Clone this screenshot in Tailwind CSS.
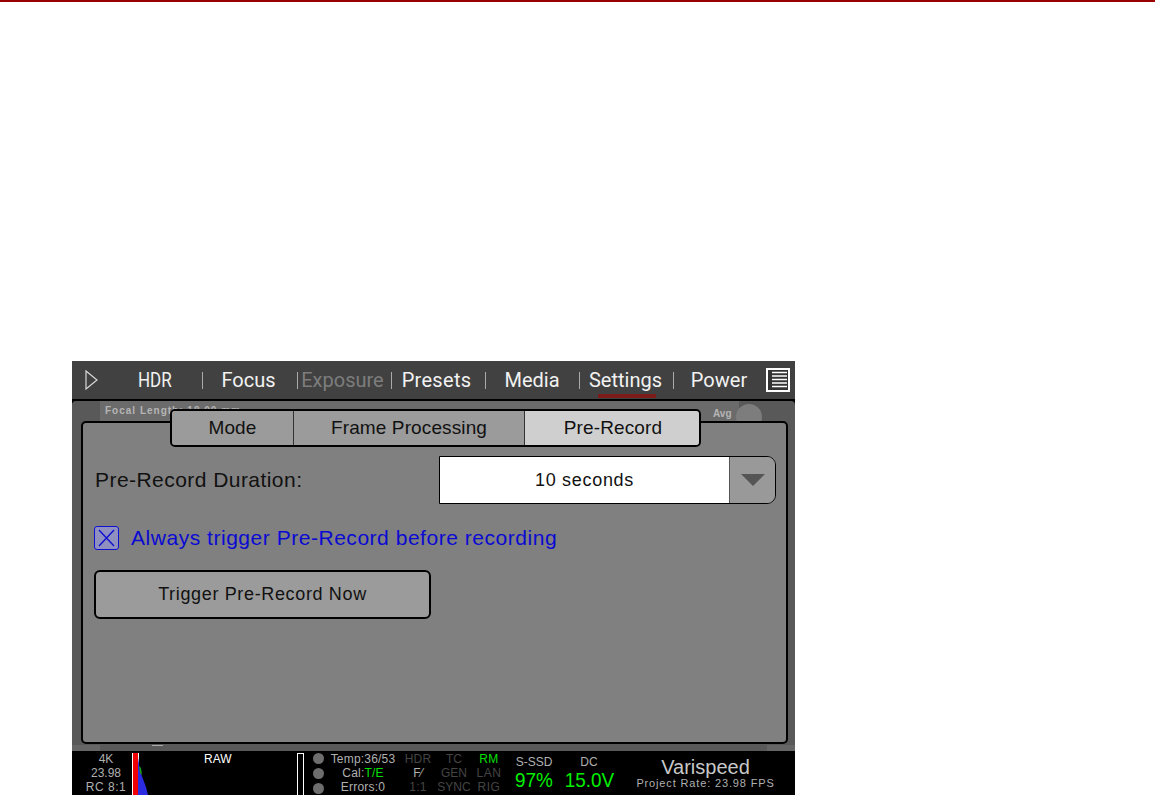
<!DOCTYPE html>
<html lang="en">
<head>
    <meta charset="UTF-8">
    <title>Pre-Record Settings</title>
    <script src="https://cdn.jsdelivr.net/npm/@tailwindcss/browser@4"></script>
</head>
<body class="bg-white h-[795px] w-[1155px] overflow-hidden font-['Liberation_Sans',sans-serif]">
    <div class="h-[2px] bg-[#9a0000]"></div>

    <!-- Camera screen -->
    <div class="ml-[72px] mt-[359px] w-[723px] h-[434px] flex flex-col bg-black overflow-hidden">
        <!-- Top menu -->
        <nav class="h-[38px] bg-[#414141] flex items-center text-[#f2f2f2] text-[20px] font-['Roboto',sans-serif] leading-none shrink-0">
            <div class="w-[36px] pl-[13px]">
                <svg width="13" height="20" viewBox="0 0 13 20" fill="none" stroke="#d8d8d8" stroke-width="1.2"><path d="M1 1 L12 10 L1 19 Z"/></svg>
            </div>
            <div class="w-[94px] text-center"><span class="inline-block scale-x-[0.85]">HDR</span></div>
            <div class="w-px h-[17px] bg-[#aaa]"></div>
            <div class="w-[94px] text-center pr-[3px]">Focus</div>
            <div class="w-px h-[17px] bg-[#aaa]"></div>
            <div class="w-[93px] text-center text-[#7d7d7d] pr-[4px]">Exposure</div>
            <div class="w-px h-[17px] bg-[#aaa]"></div>
            <div class="w-[93px] text-center pr-[4px] tracking-[0.3px]">Presets</div>
            <div class="w-px h-[17px] bg-[#aaa]"></div>
            <div class="w-[93px] text-center pr-[1px]">Media</div>
            <div class="w-px h-[17px] bg-[#aaa]"></div>
            <div class="w-[93px] text-center relative pr-[2px]">Settings
                <div class="absolute left-[18px] top-[24px] w-[58px] h-[4px] bg-[#7d1a1a]"></div>
            </div>
            <div class="w-px h-[17px] bg-[#aaa]"></div>
            <div class="w-[91px] text-center pr-[1px]">Power</div>
            <svg class="ml-[1px]" width="24" height="24" viewBox="0 0 24 24">
                <rect x="1" y="1" width="22" height="22" fill="#333" stroke="#fff" stroke-width="2"/>
                <path d="M6 4.5 H21 M6 8 H21 M6 11.5 H21 M6 15 H21 M6 18.5 H21" stroke="#fff" stroke-width="1.5"/>
            </svg>
        </nav>

        <!-- Main area -->
        <main class="relative h-[350px] mt-[2px] bg-[#595959] rounded-t-[4px] shrink-0">
            <div class="absolute left-[28px] top-0 w-[639px] h-[20px] bg-[#6b6b6b] text-[10px] font-bold tracking-[1px] text-[#b5b5b5] pl-[5px] pt-[2px]">Focal Length: 18.00 mm</div>
            <div class="absolute left-[641px] top-[5px] text-[10px] font-bold text-[#b5b5b5]">Avg</div>
            <div class="absolute left-[664px] top-[3px] w-[26px] h-[26px] rounded-full bg-[#7d7d7d]"></div>
            <div class="absolute left-0 bottom-0 w-[28px] h-[6px] bg-[#666]"></div>
            <div class="absolute right-0 bottom-0 w-[28px] h-[6px] bg-[#666]"></div>
            <div class="absolute left-[80px] bottom-[5px] w-[11px] h-px bg-[#aaa]"></div>

            <!-- Panel -->
            <div class="absolute left-[9px] top-[20px] w-[707px] h-[323px] border-2 border-black rounded-[5px] bg-[#808080] px-[11px]">
                <div class="h-[33px]"></div>
                <div class="flex items-center h-[48px]">
                    <div class="w-[345px] shrink-0 pl-px text-[21px] tracking-[0.45px] text-[#111]">Pre-Record Duration:</div>
                    <div class="w-[337px] shrink-0 h-[48px] flex border border-black rounded-r-[9px] overflow-hidden">
                        <div class="w-[289px] bg-white flex items-center justify-center text-[18px] tracking-[0.7px] text-[#111]">10 seconds</div>
                        <div class="flex-1 bg-[#999] border-l border-[#555] flex items-center justify-center">
                            <svg width="24" height="12" viewBox="0 0 24 12"><path d="M0 0 H24 L12 12 Z" fill="#555"/></svg>
                        </div>
                    </div>
                </div>
                <div class="flex items-center mt-[22px] h-[24px] text-[#0a0ad2]">
                    <div class="w-[25px] h-[24px] border border-[#1010d0] rounded-[3px] bg-[#9090c0]">
                        <svg width="23" height="22" viewBox="0 0 23 22" fill="none" stroke="#1010d0" stroke-width="1.4"><path d="M4 3 L19 19 M19 3 L4 19"/></svg>
                    </div>
                    <span class="ml-[12px] text-[21px] tracking-[0.53px] whitespace-nowrap">Always trigger Pre-Record before recording</span>
                </div>
                <button class="block mt-[20px] w-[337px] h-[49px] border-2 border-black rounded-[6px] bg-[#9b9b9b] text-[18px] tracking-[0.65px] text-[#111]">Trigger Pre-Record Now</button>
            </div>

            <!-- Tabs -->
            <div class="absolute left-[98px] top-[8px] w-[531px] h-[38px] flex border-2 border-black rounded-[5px] overflow-hidden text-[19px] tracking-[0.12px] text-[#111]">
                <div class="w-[121px] bg-[#9b9b9b] flex items-center justify-center">Mode</div>
                <div class="w-[232px] bg-[#9b9b9b] border-x border-[#333] flex items-center justify-center">Frame Processing</div>
                <div class="flex-1 bg-[#cfcfcf] flex items-center justify-center pl-[2px]">Pre-Record</div>
            </div>
        </main>

        <!-- Status bar -->
        <footer class="relative flex-1 bg-black text-[12px] leading-[14px] text-[#b0b0b0] flex pt-px">
            <div class="w-[60px] pl-[8px] text-center">
                <div>4K</div><div>23.98</div><div class="tracking-[0.5px] whitespace-nowrap">RC 8:1</div>
            </div>
            <!-- Histogram -->
            <div class="relative w-[165px] -mt-px">
                <div class="absolute left-0 top-[2px] bottom-0 w-[7px] bg-[#f00000] border-x border-white"></div>
                <svg class="absolute left-[6px] top-0" width="26" height="44" viewBox="0 0 26 44"><path d="M0 6 L2 20 L5 28 L8 36 L10 44 L0 44 Z" fill="#2b2be0"/><path d="M1 15 L3 17 L4 24 L2 22 Z" fill="#1aa01a"/></svg>
                <div class="absolute left-[72px] top-[1px] text-white">RAW</div>
            </div>
            <div class="w-[7px] mt-[1px] border-x border-t border-white mr-[9px]"></div>
            <!-- Status lights -->
            <div class="flex flex-col w-[12px] pt-[1px] gap-[4px]">
                <div class="w-[11px] h-[11px] rounded-full bg-[#6e6e6e]"></div>
                <div class="w-[11px] h-[11px] rounded-full bg-[#6e6e6e]"></div>
                <div class="w-[11px] h-[11px] rounded-full bg-[#6e6e6e]"></div>
            </div>
            <div class="w-[76px] text-center tracking-[0.2px]">
                <div>Temp:36/53</div><div>Cal:<span class="text-[#00e000]">T/E</span></div><div>Errors:0</div>
            </div>
            <div class="w-[34px] text-center text-[#444] tracking-[0.2px]">
                <div>HDR</div><div class="text-[#b0b0b0]">F⁄</div><div>1:1</div>
            </div>
            <div class="w-[38px] text-center text-[#444]">
                <div>TC</div><div>GEN</div><div>SYNC</div>
            </div>
            <div class="w-[32px] text-center text-[#444] tracking-[0.5px]">
                <div class="text-[#00e000]">RM</div><div>LAN</div><div>RIG</div>
            </div>
            <div class="w-[48px] ml-[5px] text-center">
                <div class="mt-[3px]">S-SSD</div>
                <div class="text-[#00f000] text-[21px] leading-[22px] scale-x-[0.9]">97%</div>
            </div>
            <div class="w-[54px] ml-[4px] text-center">
                <div class="mt-[3px]">DC</div>
                <div class="text-[#00f000] text-[21px] leading-[22px] whitespace-nowrap scale-x-[0.9]">15.0V</div>
            </div>
            <div class="flex-1 text-center">
                <div class="text-[20px] leading-[22px] mt-[4px] text-[#c8c8c8]">Varispeed</div>
                <div class="text-[11px] leading-[11px] tracking-[0.85px] whitespace-nowrap">Project Rate: 23.98 FPS</div>
            </div>
        </footer>
    </div>
</body>
</html>
